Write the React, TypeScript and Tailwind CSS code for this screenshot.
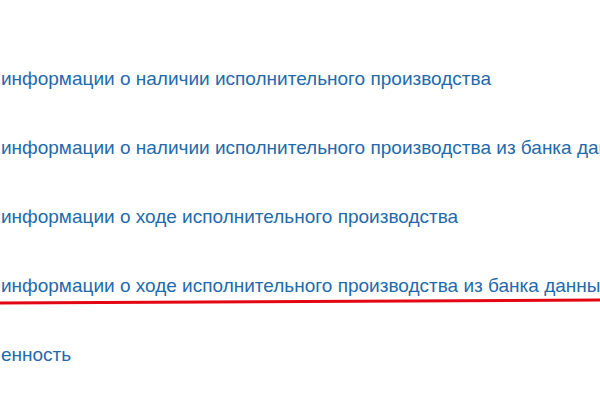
import React from "react";

const items = [
  "информации о наличии исполнительного производства",
  "информации о наличии исполнительного производства из банка данных",
  "информации о ходе исполнительного производства",
  "информации о ходе исполнительного производства из банка данных",
  "енность",
];

export default function App() {
  return (
    <div className="w-[600px] h-[400px] bg-white overflow-hidden relative" style={{ fontFamily: '"Liberation Sans", Arial, sans-serif' }}>
      <div className="flex flex-col gap-[46px] pt-[67px]">
        {items.map((t, i) => (
          <div key={i} className="relative whitespace-nowrap text-[19px] leading-[23px] text-[#236aab] pl-[1px]">
            {t}
          </div>
        ))}
      </div>
      <svg className="absolute left-0 top-[296px]" width="600" height="10" viewBox="0 0 600 10">
        <path d="M0 7 Q300 5 600 4" stroke="#e30613" strokeWidth="3" fill="none" />
      </svg>
    </div>
  );
}
